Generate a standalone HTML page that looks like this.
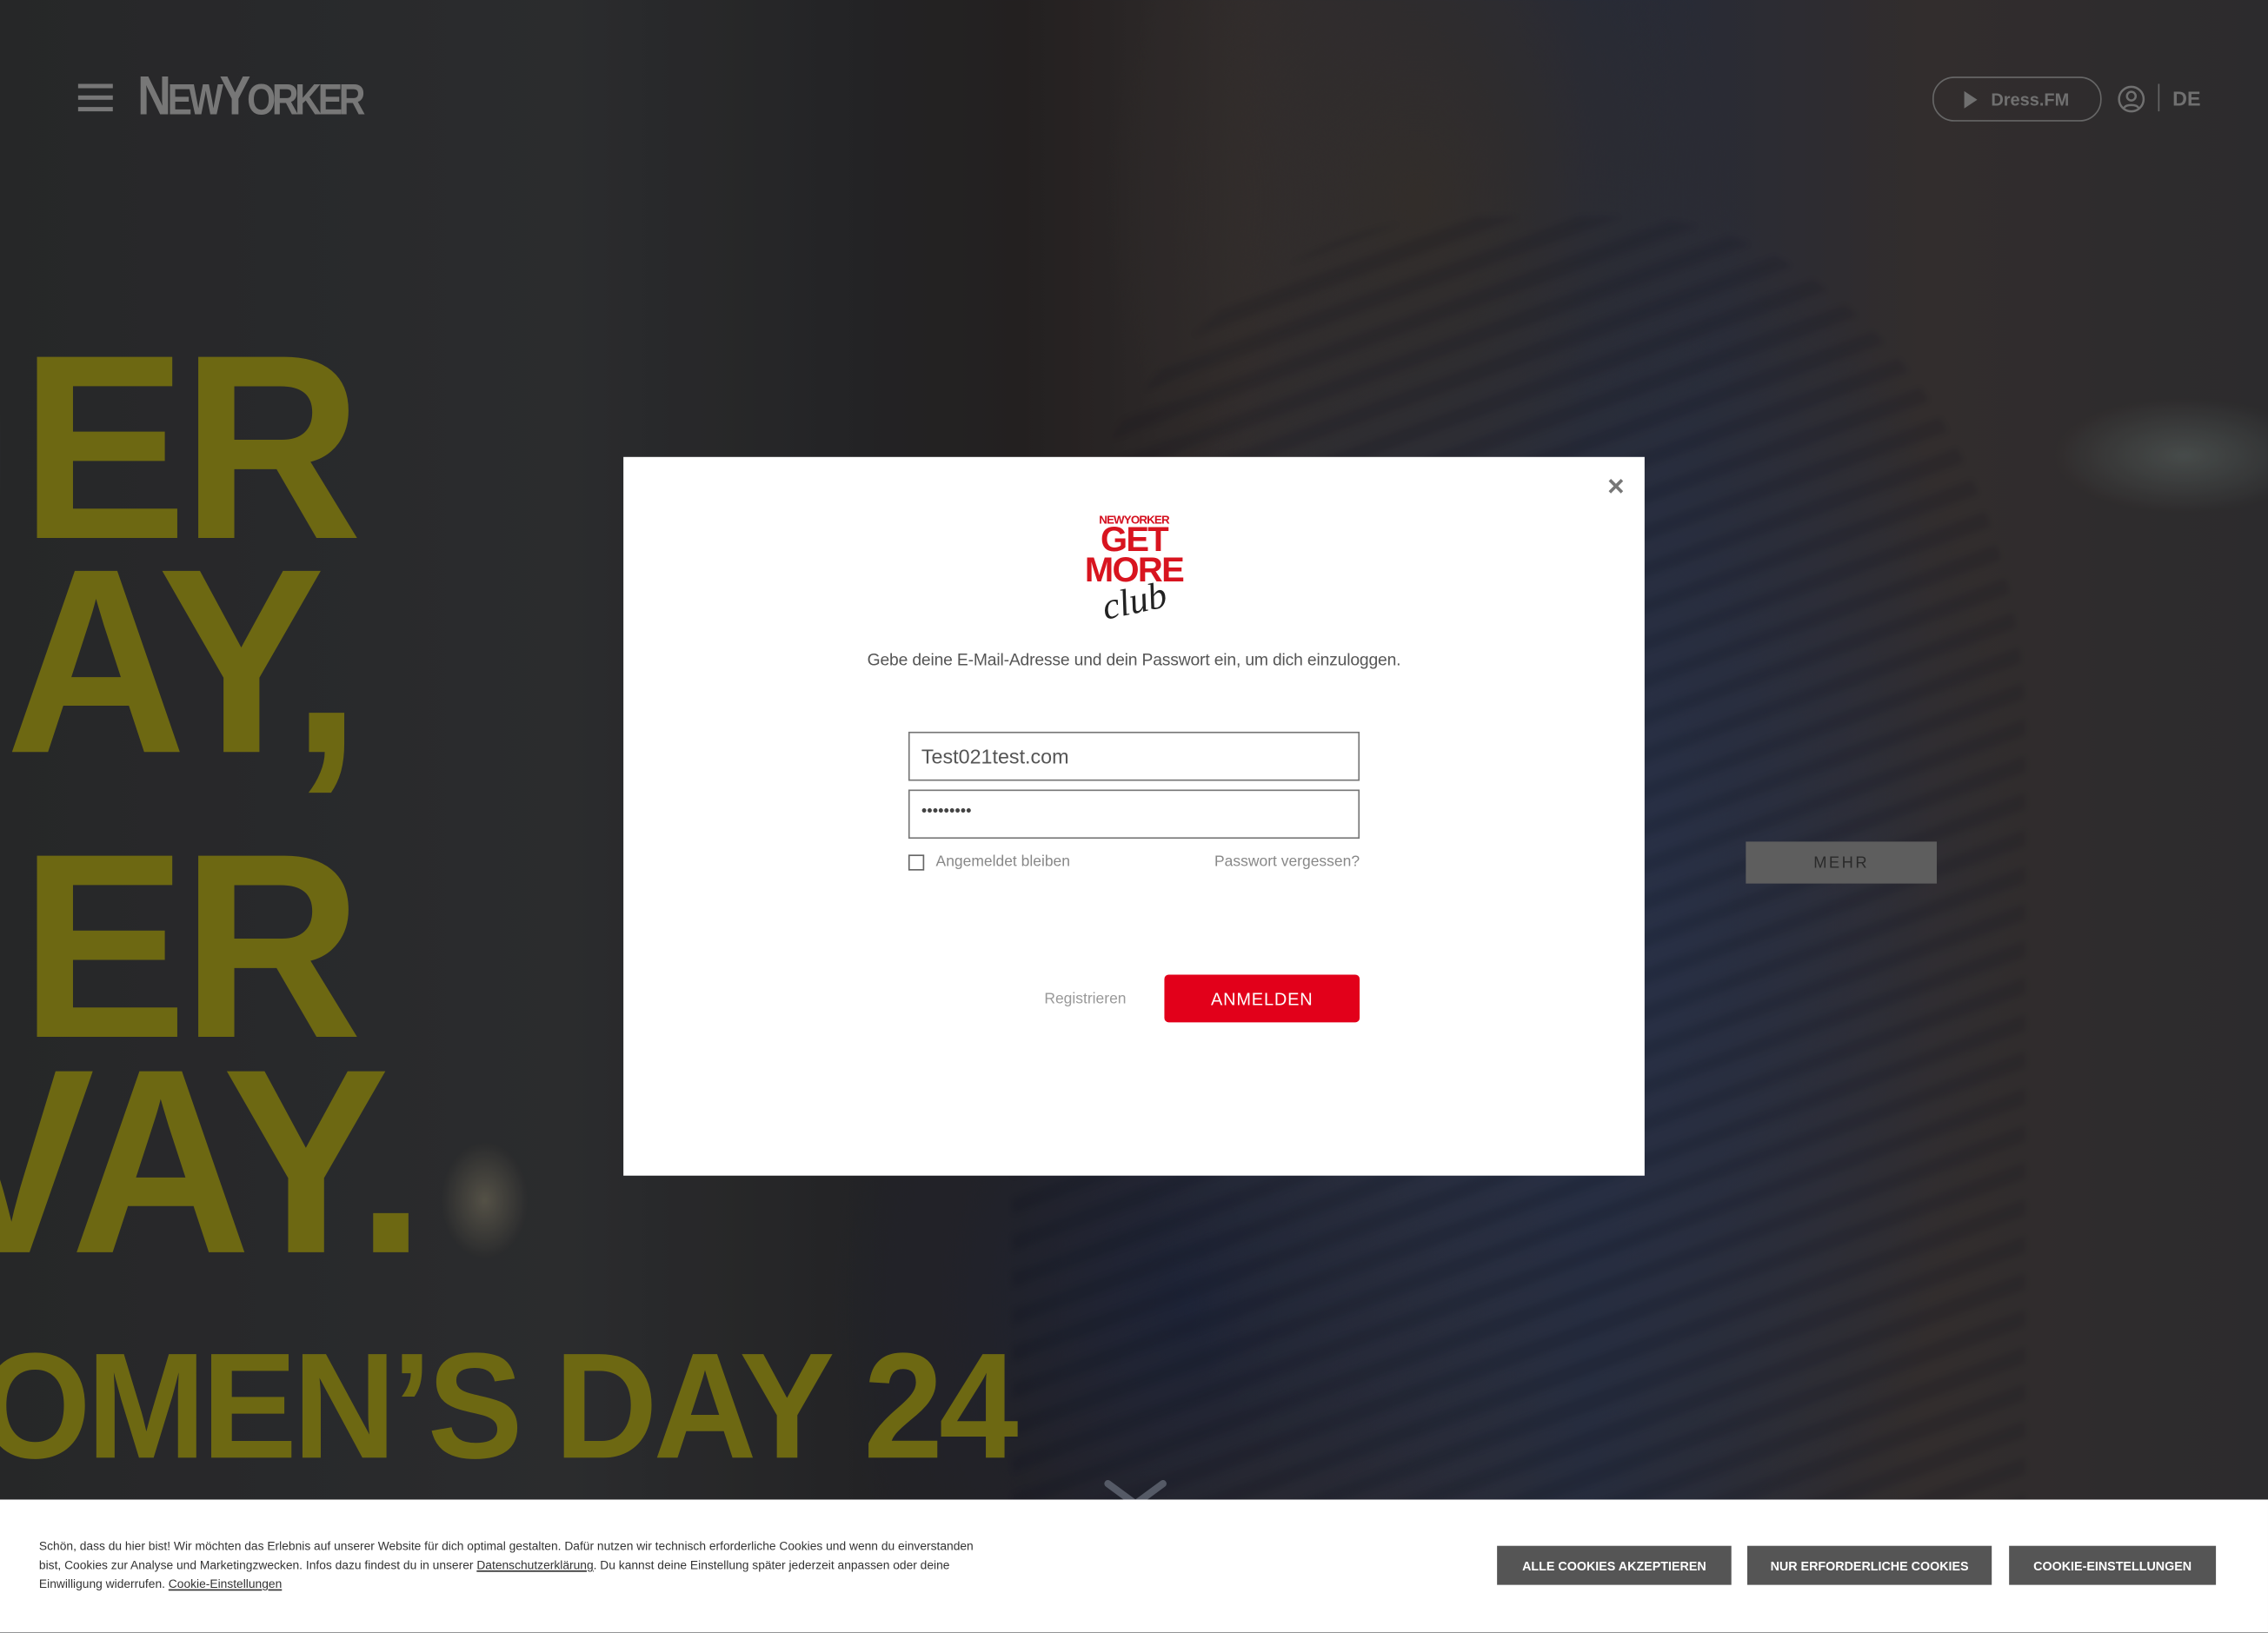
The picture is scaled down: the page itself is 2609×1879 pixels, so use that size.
<!DOCTYPE html>
<html><head><meta charset="utf-8">
<style>
html,body{margin:0;padding:0;width:2609px;height:1879px;overflow:hidden;background:#2a2b2e}
#w{position:absolute;left:0;top:0;width:1568px;height:1129.3px;transform:scale(1.66390);transform-origin:0 0;overflow:hidden;font-family:"Liberation Sans",sans-serif}
.bg{position:absolute;inset:0;background:
radial-gradient(ellipse 90px 40px at 1510px 315px,rgba(120,135,130,.45),transparent),
radial-gradient(ellipse 30px 40px at 335px 830px,rgba(160,150,120,.45),transparent),
radial-gradient(ellipse 220px 300px at 980px 140px,#3b3532,transparent),
radial-gradient(ellipse 320px 520px at 1080px 620px,#2f3a55,transparent),
radial-gradient(ellipse 250px 300px at 820px 900px,#232a40,transparent),
linear-gradient(90deg,#2d2e30 0%,#333436 25%,#2a2a2c 38%,#2a2626 45%,#3a3434 55%,#2c3244 70%,#3b3535 85%,#343335 100%)}
.stripes{position:absolute;left:700px;top:150px;width:700px;height:900px;background:repeating-linear-gradient(160deg,rgba(0,0,0,0) 0 14px,rgba(10,14,30,.3) 14px 24px);opacity:.45;border-radius:45% 40% 0 0;filter:blur(2px)}
.y{position:absolute;color:#6d6812;font-weight:bold;letter-spacing:-4px;line-height:1;transform:scaleX(.95);transform-origin:0 0;white-space:nowrap}
.cookie{position:absolute;left:0;top:1037px;width:1568px;height:93px;background:#fff}
.ck{position:absolute;left:27px;top:1063px;width:720px;font-size:8.3px;line-height:13px;color:#333}
.ck u{color:#333}
.cb{position:absolute;top:1069px;height:27px;background:#555;color:#fff;font-size:8.6px;font-weight:bold;display:flex;align-items:center;justify-content:center}
.modal{position:absolute;left:431px;top:316px;width:706px;height:497px;background:#fff}
.inp{position:absolute;left:197px;width:312px;height:34px;border:1px solid #777;box-sizing:border-box;background:#fff}
</style></head><body><div id="w">
<div class="bg"></div><div class="stripes"></div>
<div style="position:absolute;left:0;top:0;width:1568px;height:1037px;background:rgba(0,0,0,.15)"></div>
<div class="y" style="left:14px;top:218px;font-size:182px">ER</div>
<div class="y" style="left:4px;top:366px;font-size:182px">AY,</div>
<div class="y" style="left:14px;top:563px;font-size:182px">ER</div>
<div class="y" style="left:-50px;top:712px;font-size:182px">VAY.</div>
<div class="y" style="left:-14px;top:921px;font-size:104px;letter-spacing:-3px">OMEN’S DAY 24</div>
<div style="position:absolute;left:54px;top:58px;width:24px">
<div style="height:3px;background:#777;margin-bottom:5px"></div><div style="height:3px;background:#777;margin-bottom:5px"></div><div style="height:3px;background:#777"></div></div>
<div style="position:absolute;left:95px;top:46px;color:#777;font-weight:bold;font-size:38px;letter-spacing:-3px;transform:scaleX(.85);transform-origin:0 0;white-space:nowrap">N<span style="font-size:30px">EW</span>Y<span style="font-size:30px">ORKER</span></div>
<div style="position:absolute;left:1336px;top:53px;width:115px;height:29px;border:1px solid #666;border-radius:15px;color:#707070;font-size:12px;font-weight:bold;display:flex;align-items:center;justify-content:center"><span style="display:inline-block;border-left:9px solid #707070;border-top:6px solid transparent;border-bottom:6px solid transparent;margin-right:9px"></span>Dress.FM</div>
<svg style="position:absolute;left:1464px;top:59px" width="19" height="19" viewBox="0 0 19 19" fill="none" stroke="#707070" stroke-width="1.5"><circle cx="9.5" cy="9.5" r="8.5"/><circle cx="9.5" cy="7.5" r="3"/><path d="M4.5 15.5c1.5-2.5 8.5-2.5 10 0"/></svg>
<div style="position:absolute;left:1492px;top:58px;width:1px;height:19px;background:#666"></div>
<div style="position:absolute;left:1502px;top:60px;color:#707070;font-size:14px;font-weight:bold">DE</div>
<div style="position:absolute;left:1207px;top:582px;width:132px;height:29px;background:#5e5e5e;color:#2a2a2a;font-size:11px;letter-spacing:1.5px;display:flex;align-items:center;justify-content:center">MEHR</div>
<svg style="position:absolute;left:762px;top:1022px" width="46" height="16"><path d="M4 4l19 14M42 4L23 18" stroke="#555a66" stroke-width="5" stroke-linecap="round"/></svg>
<div class="modal">
<div style="position:absolute;right:14px;top:10px;color:#777;font-size:20px;font-weight:bold">×</div>
<div style="position:absolute;left:315px;top:39px;width:76px;height:80px;text-align:center">
<div style="color:#d40f1e;font-weight:bold;font-size:8px;letter-spacing:-.5px">NEWYORKER</div>
<div style="color:#d8141f;font-weight:bold;font-size:24px;line-height:20px;letter-spacing:-1px">GET</div>
<div style="color:#d8141f;font-weight:bold;font-size:24px;line-height:22px;letter-spacing:-1px">MORE</div>
<div style="position:absolute;left:16px;top:46px;font-family:'Liberation Serif',serif;font-style:italic;font-size:26px;color:#222;transform:rotate(-12deg)">club</div>
</div>
<div style="position:absolute;left:0;width:706px;top:134px;text-align:center;font-size:11.6px;color:#555;letter-spacing:-.1px">Gebe deine E-Mail-Adresse und dein Passwort ein, um dich einzuloggen.</div>
<div class="inp" style="top:190px;font-size:14px;color:#555;padding:8px 0 0 8px">Test021test.com</div>
<div class="inp" style="top:230px;font-size:11px;color:#444;padding:8px 0 0 8px;letter-spacing:0">•••••••••</div>
<div style="position:absolute;left:197px;top:275px;width:9px;height:9px;border:1px solid #666"></div>
<div style="position:absolute;left:216px;top:274px;font-size:10.5px;color:#888">Angemeldet bleiben</div>
<div style="position:absolute;right:197px;top:274px;font-size:10.5px;color:#888">Passwort vergessen?</div>
<div style="position:absolute;left:291px;top:369px;font-size:10.5px;color:#999">Registrieren</div>
<div style="position:absolute;left:374px;top:358px;width:135px;height:33px;background:#e2001a;border-radius:3px;color:#fff;font-size:12px;letter-spacing:.5px;display:flex;align-items:center;justify-content:center">ANMELDEN</div>
</div>
<div class="cookie"></div>
<div class="ck">Schön, dass du hier bist! Wir möchten das Erlebnis auf unserer Website für dich optimal gestalten. Dafür nutzen wir technisch erforderliche Cookies und wenn du einverstanden<br>bist, Cookies zur Analyse und Marketingzwecken. Infos dazu findest du in unserer <u>Datenschutzerklärung</u>. Du kannst deine Einstellung später jederzeit anpassen oder deine<br>Einwilligung widerrufen. <u>Cookie-Einstellungen</u></div>
<div class="cb" style="left:1035px;width:162px">ALLE COOKIES AKZEPTIEREN</div>
<div class="cb" style="left:1208px;width:169px">NUR ERFORDERLICHE COOKIES</div>
<div class="cb" style="left:1389px;width:143px">COOKIE-EINSTELLUNGEN</div>
</div></body></html>
